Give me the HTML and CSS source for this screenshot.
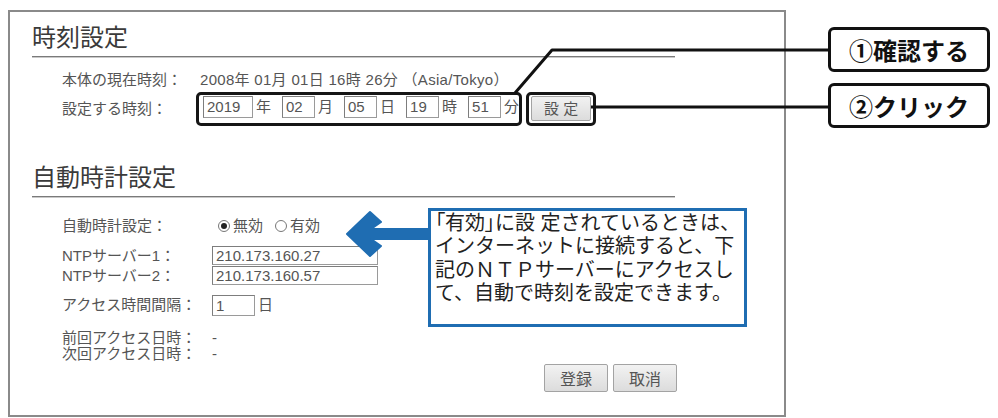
FILE: index.html
```html
<!DOCTYPE html>
<html lang="ja">
<head>
<meta charset="utf-8">
<title>時刻設定</title>
<link rel="stylesheet" href="styles.css">
</head>
<body>
<div class="page">
  <section class="panel">
    <h2 class="sec-title">時刻設定</h2>
    <div class="rows rows-time">
      <div class="row row-now">
        <span class="label">本体の現在時刻：</span>
        <span class="now-value">2008年 01月 01日 16時 26分 （Asia/Tokyo）</span>
      </div>
      <div class="row row-set">
        <span class="label">設定する時刻：</span>
        <span class="hl">
          <span class="field f-year">2019</span><span class="unit">年</span>
          <span class="field f-2">02</span><span class="unit">月</span>
          <span class="field f-2">05</span><span class="unit">日</span>
          <span class="field f-2">19</span><span class="unit">時</span>
          <span class="field f-2">51</span><span class="unit unit-last">分</span>
        </span>
        <span class="hl hl-btn"><span class="btn btn-set">設 定</span></span>
      </div>
    </div>

    <h2 class="sec-title sec-auto">自動時計設定</h2>
    <div class="rows rows-auto">
      <div class="row r-radio">
        <span class="label">自動時計設定：</span>
        <span class="radio checked"></span><span class="radio-text">無効</span>
        <span class="radio radio-2"></span><span class="radio-text">有効</span>
      </div>
      <div class="row r-ntp1">
        <span class="label">NTPサーバー1：</span>
        <span class="field wide">210.173.160.27</span>
      </div>
      <div class="row r-ntp2">
        <span class="label">NTPサーバー2：</span>
        <span class="field wide">210.173.160.57</span>
      </div>
      <div class="row r-interval">
        <span class="label">アクセス時間間隔：</span>
        <span class="field small">1</span><span class="unit">日</span>
      </div>
      <div class="row r-prev">
        <span class="label">前回アクセス日時：</span>
        <span class="dash">-</span>
      </div>
      <div class="row r-next">
        <span class="label">次回アクセス日時：</span>
        <span class="dash">-</span>
      </div>
    </div>

    <div class="actions">
      <span class="btn btn-action">登録</span>
      <span class="btn btn-action">取消</span>
    </div>
  </section>

  <div class="callout callout-1">①確認する</div>
  <div class="callout callout-2">②クリック</div>

  <div class="note">
    <div class="note-line"><span class="br">「</span>有効<span class="br">」</span>に設 定されているときは、</div>
    <div class="note-line">インターネットに接続すると、下</div>
    <div class="note-line">記のＮＴＰサーバーにアクセスし</div>
    <div class="note-line">て、自動で時刻を設定できます。</div>
  </div>

  <svg class="overlay" width="998" height="418" viewBox="0 0 998 418" aria-hidden="true">
    <polyline points="829,50 552,50 515,93" fill="none" stroke="#111" stroke-width="3" stroke-linejoin="round"/>
    <line x1="591" y1="107" x2="829" y2="107" stroke="#111" stroke-width="3"/>
    <polygon points="347,234 370,212 381,222 371,229 430,229 430,239 371,239 381,246 370,256"
      fill="#1f6db2" stroke="#1f6db2" stroke-width="2" stroke-linejoin="round"/>
  </svg>
</div>
</body>
</html>
```

FILE: styles.css
```css
html, body {
  margin: 0;
  padding: 0;
  background: #ffffff;
}

body {
  font-family: "Liberation Sans", "Noto Sans CJK JP", sans-serif;
  color: #555;
}

.page {
  position: relative;
  width: 998px;
  height: 418px;
  box-sizing: border-box;
  padding: 10px 0 0 8px;
  overflow: hidden;
}

.panel {
  width: 778px;
  height: 407px;
  box-sizing: border-box;
  border: 2px solid #8a8a8a;
  background: #fff;
}

.sec-title {
  margin: 12px 0 0 22px;
  width: 643px;
  font-size: 24px;
  line-height: 28px;
  font-weight: 400;
  color: #3a3a3a;
  padding-bottom: 4px;
  border-bottom: 1px solid #7a7a7a;
  box-shadow: 0 1px 0 #c9c9c9;
}

.sec-auto {
  margin-top: 38px;
}

.rows {
  padding-left: 52px;
}

.row {
  display: flex;
  align-items: center;
  font-size: 15px;
  line-height: 16px;
  white-space: nowrap;
}

.label {
  flex: none;
  color: #555;
}

/* time section */
.rows-time {
  margin-top: 13px;
}

.rows-time .label {
  width: 138px;
}

.row-now {
  height: 20px;
}

.now-value {
  font-size: 15px;
  letter-spacing: 0.3px;
  color: #555;
}

.row-set {
  margin-top: 2px;
  align-items: flex-start;
}

.row-set .label {
  margin-top: 9px;
}

.hl {
  display: flex;
  align-items: flex-start;
  margin-left: -4px;
  padding: 1px 0 5px 4px;
  border: 3px solid #161616;
  border-radius: 5px;
}

.hl-btn {
  margin-left: 4px;
  padding: 1px 2px 2px 2px;
}

.field {
  box-sizing: border-box;
  height: 22px;
  border: 1px solid #9a9a9a;
  border-top-color: #7d7d7d;
  border-left-color: #7d7d7d;
  background: #fff;
  font-size: 15px;
  line-height: 20px;
  padding-left: 3px;
  color: #555;
}

.f-year {
  width: 50px;
}

.f-2 {
  width: 33px;
}

.unit {
  font-size: 15px;
  line-height: 22px;
  margin: 0 11px 0 3px;
  color: #555;
}

.unit-last {
  margin-right: 0;
}

.btn {
  display: flex;
  align-items: center;
  justify-content: center;
  box-sizing: border-box;
  border: 1px solid #a3a3a3;
  border-radius: 2px;
  background: linear-gradient(#f2f2f2, #dcdcdc);
  color: #555;
  font-size: 15px;
}

.btn-set {
  width: 60px;
  height: 25px;
}

/* auto section */
.rows-auto .label {
  width: 150px;
}

.r-radio {
  margin-top: 18px;
  height: 22px;
}

.radio {
  box-sizing: border-box;
  width: 12px;
  height: 12px;
  border: 1px solid #777;
  border-radius: 50%;
  margin-left: 6px;
  display: flex;
  align-items: center;
  justify-content: center;
  background: #fff;
}

.radio.checked::after {
  content: "";
  width: 6px;
  height: 6px;
  border-radius: 50%;
  background: #222;
}

.radio-2 {
  margin-left: 12px;
}

.radio-text {
  margin-left: 3px;
  font-size: 15px;
  color: #555;
}

.r-ntp1 {
  margin-top: 9px;
  height: 19px;
}

.r-ntp2 {
  margin-top: 1px;
  height: 19px;
}

.wide {
  width: 166px;
  height: 19px;
  line-height: 17px;
}

.r-interval {
  margin-top: 9px;
  height: 22px;
}

.small {
  width: 43px;
  height: 21px;
  line-height: 19px;
}

.r-interval .unit {
  margin-left: 3px;
}

.r-prev {
  margin-top: 13px;
  height: 17px;
}

.r-next {
  height: 16px;
}

.dash {
  color: #555;
}

.actions {
  display: flex;
  justify-content: flex-end;
  gap: 5px;
  margin-top: 2px;
  padding-right: 107px;
}

.btn-action {
  width: 64px;
  height: 28px;
  font-size: 16px;
}

/* annotations */
.callout {
  position: absolute;
  left: 828px;
  width: 162px;
  height: 45px;
  box-sizing: border-box;
  border: 3px solid #111;
  border-radius: 6px;
  background: #fff;
  display: flex;
  align-items: center;
  justify-content: center;
  font-size: 24px;
  font-weight: 700;
  color: #111;
  white-space: nowrap;
}

.callout-1 {
  top: 27px;
}

.callout-2 {
  top: 83px;
}

.note {
  position: absolute;
  left: 428px;
  top: 208px;
  width: 319px;
  height: 119px;
  box-sizing: border-box;
  border: 3px solid #1f6db2;
  background: #fff;
  padding: 1px 0 0 4px;
  font-size: 20px;
  color: #222;
  white-space: nowrap;
}

.note-line {
  height: 23.3px;
  line-height: 23.3px;
}

.note .br {
  font-feature-settings: "palt";
}

.overlay {
  position: absolute;
  left: 0;
  top: 0;
  pointer-events: none;
}
```
